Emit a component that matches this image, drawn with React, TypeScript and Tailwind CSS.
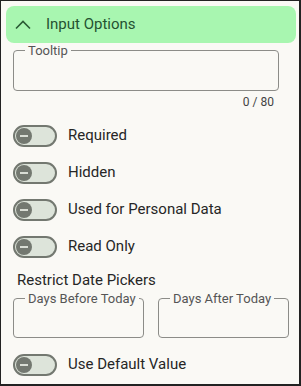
const toggles = ["Required", "Hidden", "Used for Personal Data", "Read Only"]

function Toggle() {
  return (
    <div className="w-[44px] h-[22px] shrink-0 rounded-full border-2 border-[#737870] bg-[#dde4da] flex items-center pl-[1px]">
      <div className="w-4 h-4 rounded-full bg-[#737870] flex items-center justify-center">
        <div className="w-[8px] h-[2px] bg-[#d9ddd5]" />
      </div>
    </div>
  )
}

function ToggleRow({ label }: { label: string }) {
  return (
    <div className="h-[37px] flex items-center ml-[7px] gap-[11px]">
      <Toggle />
      <span className="text-[15px] text-[#262626]">{label}</span>
    </div>
  )
}

function Outlined({ label, className }: { label: string; className: string }) {
  return (
    <fieldset className={`border border-[#8c8c88] rounded-[4px] ${className}`}>
      <legend className="ml-[11px] px-[3px] text-[13px] leading-[15px] text-[#555]">{label}</legend>
    </fieldset>
  )
}

export default function App() {
  return (
    <div
      className="w-[301px] h-[386px] bg-[#faf9f5] border-l border-t border-r-2 border-b-2 border-[#222] pt-[5px] pl-[5px] flex flex-col"
      style={{ fontFamily: "Roboto, 'Liberation Sans', sans-serif" }}>

      {/* Section header */}
      <div className="w-[290px] h-[37px] shrink-0 rounded-lg bg-[#a8f6b0] flex items-center">
        <svg width="16" height="10" viewBox="0 0 16 10" className="ml-[9px]">
          <polyline points="1,8.5 8,1.5 15,8.5" fill="none" stroke="#2a5a34" strokeWidth="1.6" />
        </svg>
        <span className="ml-[15px] text-[15px] text-[#245230]">Input Options</span>
      </div>

      <Outlined label="Tooltip" className="ml-[7px] w-[266px] h-[48px] shrink-0" />
      <div className="ml-[7px] w-[266px] mt-[4px] pr-[5px] text-right text-[12px] leading-[14px] text-[#444]">0 / 80</div>

      <div className="mt-[8px] flex flex-col">
        {toggles.map((t) => (
          <ToggleRow key={t} label={t} />
        ))}
      </div>

      <div className="mt-[6px] ml-[11px] text-[15px] leading-[18px] text-[#262626]">Restrict Date Pickers</div>
      <div className="mt-[2px] ml-[7px] flex gap-[14px]">
        <Outlined label="Days Before Today" className="w-[131px] h-[47px]" />
        <Outlined label="Days After Today" className="w-[131px] h-[47px]" />
      </div>

      <div className="mt-[8px]">
        <ToggleRow label="Use Default Value" />
      </div>
    </div>
  )
}
